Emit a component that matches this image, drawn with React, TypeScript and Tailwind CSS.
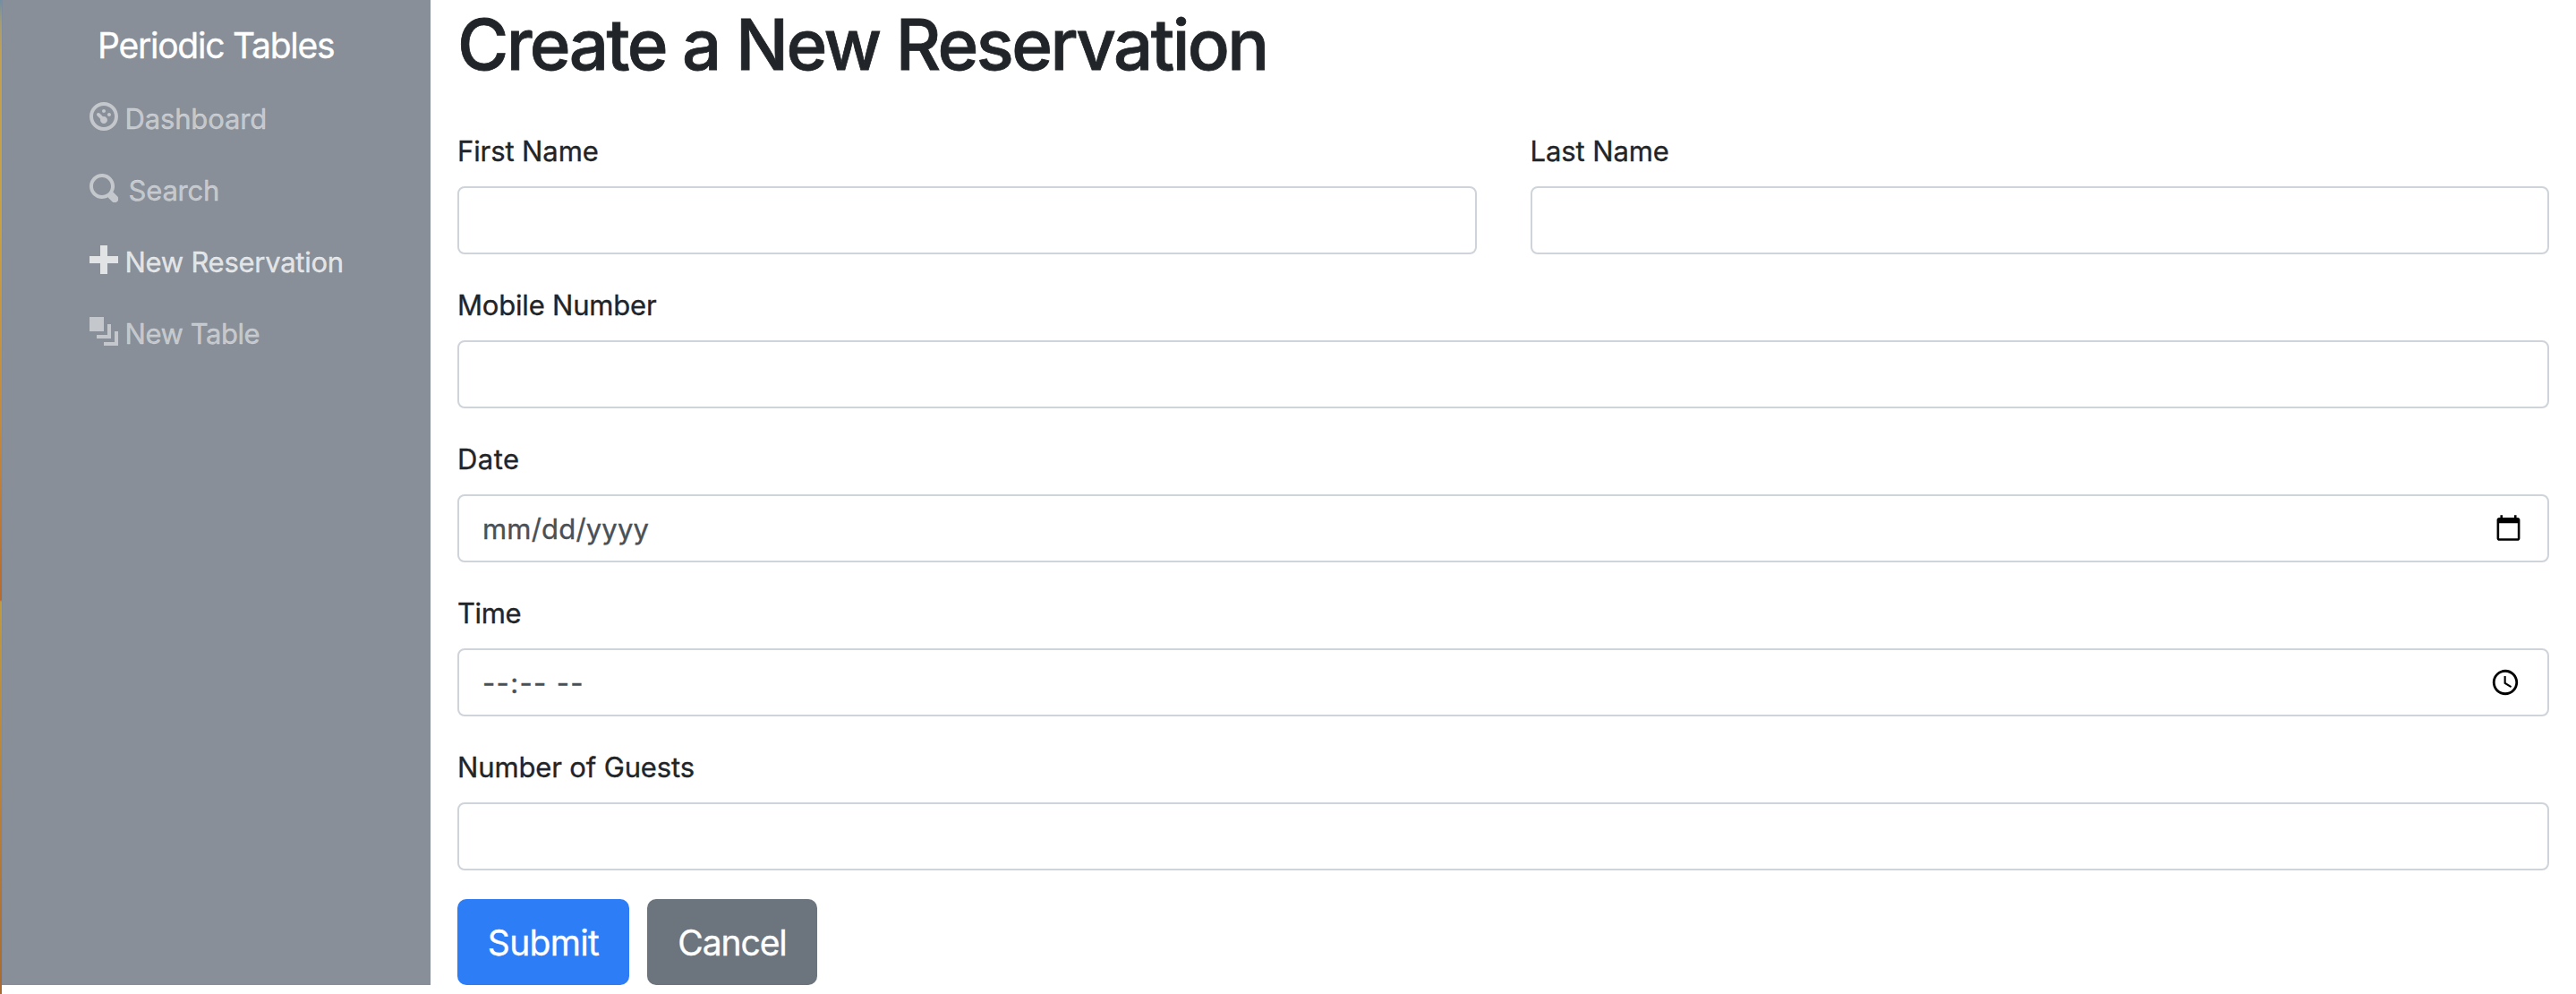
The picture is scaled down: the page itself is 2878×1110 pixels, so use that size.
import type { ReactNode } from "react";

const ICONS = {
  dashboard:
    "M4 0c-2.2 0-4 1.8-4 4s1.8 4 4 4 4-1.8 4-4-1.8-4-4-4zm0 1c1.66 0 3 1.34 3 3s-1.34 3-3 3-3-1.34-3-3 1.34-3 3-3zm0 1c-.28 0-.5.22-.5.5s.22.5.5.5.5-.22.5-.5-.22-.5-.5-.5zm-1.66 1a.5.5 0 0 0-.19.84l.91.91c-.02.08-.06.16-.06.25 0 .55.45 1 1 1s1-.45 1-1-.45-1-1-1c-.09 0-.17.04-.25.06l-.91-.91a.5.5 0 0 0-.44-.16.5.5 0 0 0-.06 0zm3.16 0c-.28 0-.5.22-.5.5s.22.5.5.5.5-.22.5-.5-.22-.5-.5-.5z",
  search:
    "M3.5 0c-1.93 0-3.5 1.57-3.5 3.5s1.57 3.5 3.5 3.5c.59 0 1.17-.14 1.66-.41a1 1 0 0 0 .13.13l1 1a1.02 1.02 0 1 0 1.44-1.44l-1-1a1 1 0 0 0-.16-.13c.27-.49.44-1.06.44-1.66 0-1.93-1.55-3.5-3.5-3.5zm0 1c1.39 0 2.5 1.11 2.5 2.5 0 .66-.24 1.27-.66 1.72-.01.01-.02.02-.03.03a1 1 0 0 0-.13.13c-.44.4-1.04.63-1.69.63-1.39 0-2.5-1.11-2.5-2.5s1.11-2.5 2.5-2.5z",
  plus: "M3 0v3h-3v2h3v3h2v-3h3v-2h-3v-3h-2z",
  layers: "M0 0v4h4v-4h-4zm5 2v3h-3v1h4v-4h-1zm2 2v3h-3v1h4v-4h-1z",
};

function NavItem({ icon, label, className }: { icon: keyof typeof ICONS; label: string; className: string }) {
  return (
    <a href="#" className={`flex h-20 items-center pl-[96.5px] text-[31px] leading-[48px] ${className}`}>
      <svg viewBox="0 0 8 8" className="-mt-[5px] h-8 w-8 shrink-0" fill="currentColor">
        <path d={ICONS[icon]} />
      </svg>
      <span className="pt-[2px] whitespace-nowrap">{label}</span>
    </a>
  );
}

const BOX =
  "flex h-[76px] w-full items-center rounded-lg border-2 border-[#ced4da] bg-white pl-[26px] text-[31px] leading-[48px] text-[#495057]";

function Field({ label, tracking, children }: { label: string; tracking: string; children?: ReactNode }) {
  return (
    <div className="mb-8 min-w-0 flex-1">
      <label className={`mb-[15px] block pt-px text-[31px] leading-[48px] ${tracking}`}>{label}</label>
      {children ?? <input className={BOX} />}
    </div>
  );
}

export default function App() {
  return (
    <div className="flex h-[1110px] w-full overflow-hidden bg-white font-['Inter',sans-serif] text-[#212529] [-webkit-text-stroke:0.35px]">
      <div className="h-full w-[2px] shrink-0 bg-[linear-gradient(to_bottom,#6f8fa3_0px,#a59c74_25px,#c3a050_60px,#c9a043_250px,#c4883a_480px,#b8692c_670px,#c19a3e_672px,#b97f36_900px,#a9692f_1110px)]" />
      <nav className="h-[1100px] w-[479px] shrink-0 border-l border-[#7f8c9f] bg-[#888f98]">
        <div className="h-[92px] pt-[21px] pl-[106px] text-[39px] leading-[60px] tracking-[-1.24px] whitespace-nowrap text-white">
          Periodic Tables
        </div>
        <NavItem icon="dashboard" label="Dashboard" className="gap-[8px] tracking-[-0.15px] text-white/50" />
        <NavItem icon="search" label="Search" className="gap-[12px] tracking-[-0.19px] text-white/50" />
        <NavItem icon="plus" label="New Reservation" className="gap-[8px] tracking-[-0.27px] text-white/75" />
        <NavItem icon="layers" label="New Table" className="gap-[8px] tracking-[-0.45px] text-white/50" />
      </nav>
      <main className="min-w-0 flex-1 pr-[30px] pl-[30px]">
        <h1 className="mb-[46px] pt-[2px] text-[78px] leading-[96px] font-medium tracking-[-2.58px] whitespace-nowrap [-webkit-text-stroke:0.8px]">
          Create a New Reservation
        </h1>
        <div className="flex gap-[60px]">
          <Field label="First Name" tracking="tracking-[-0.1px]" />
          <Field label="Last Name" tracking="tracking-[-0.1px]" />
        </div>
        <Field label="Mobile Number" tracking="tracking-[-0.19px]" />
        <Field label="Date" tracking="tracking-[0.46px]">
          <div className={BOX}>
            <span className="pt-px tracking-[0.19px]">mm/dd/yyyy</span>
            <svg viewBox="0 0 24 24" className="-mt-[2px] mr-[28px] ml-auto h-[31px] w-[31px]" fill="#000">
              <path d="M20 3h-1V1h-2v2H7V1H5v2H4c-1.1 0-2 .9-2 2v16c0 1.1.9 2 2 2h16c1.1 0 2-.9 2-2V5c0-1.1-.9-2-2-2zm0 18H4V8h16v13z" />
            </svg>
          </div>
        </Field>
        <Field label="Time" tracking="tracking-[-0.42px]">
          <div className={BOX}>
            <span className="pt-[2px] tracking-[1.34px]">--:-- --</span>
            <svg viewBox="0 0 24 24" className="mr-[30px] ml-auto h-[34px] w-[34px]" fill="#000">
              <path d="M11.99 2C6.47 2 2 6.48 2 12s4.47 10 9.99 10C17.52 22 22 17.52 22 12S17.52 2 11.99 2zM12 20c-4.42 0-8-3.58-8-8s3.58-8 8-8 8 3.58 8 8-3.58 8-8 8zm.5-13H11v6l5.25 3.15.75-1.23-4.5-2.67z" />
            </svg>
          </div>
        </Field>
        <Field label="Number of Guests" tracking="tracking-[-0.14px]" />
        <div className="flex gap-5 text-[39px] leading-[60px] text-white">
          <button className="h-24 w-48 rounded-[10px] bg-[#2d7df6] pt-px tracking-[-0.65px]">Submit</button>
          <button className="h-24 w-[190px] rounded-[10px] bg-[#6c757d] pt-px tracking-[-1.1px]">Cancel</button>
        </div>
      </main>
    </div>
  );
}
